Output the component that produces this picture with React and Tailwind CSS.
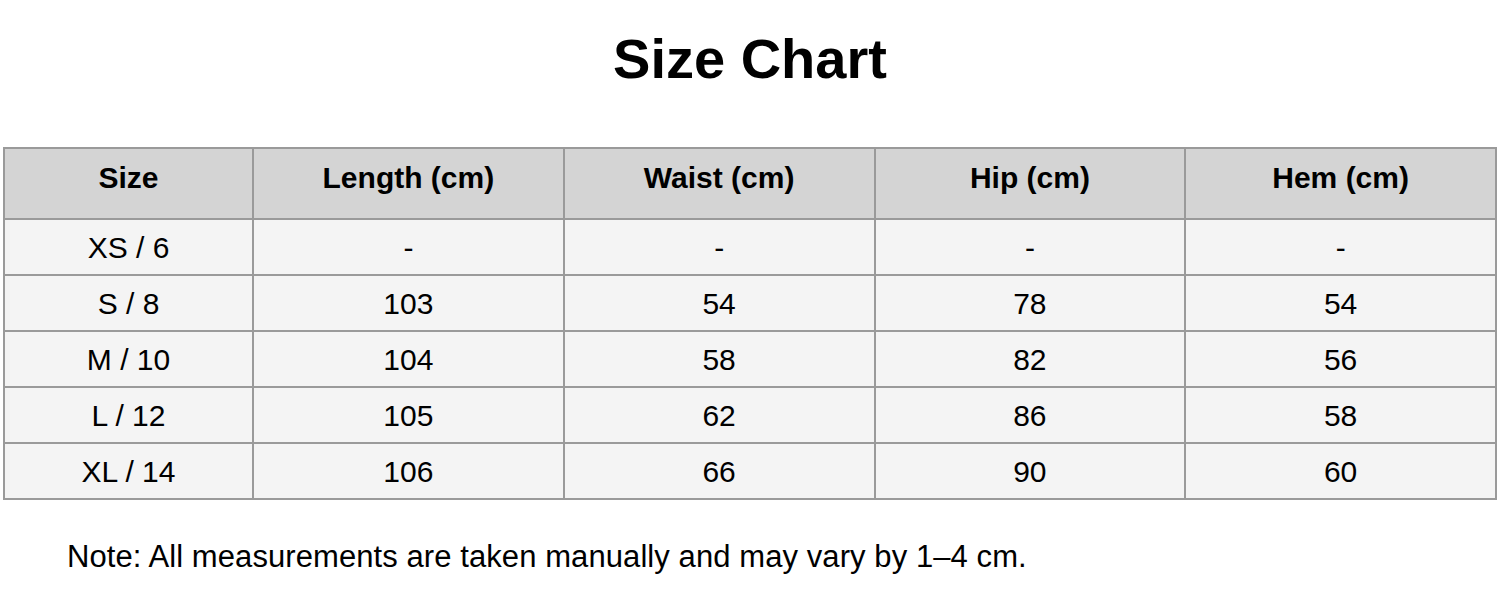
import React from "react";

const rows = [
  ["XS / 6", "-", "-", "-", "-"],
  ["S / 8", "103", "54", "78", "54"],
  ["M / 10", "104", "58", "82", "56"],
  ["L / 12", "105", "62", "86", "58"],
  ["XL / 14", "106", "66", "90", "60"],
];

const headers = ["Size", "Length (cm)", "Waist (cm)", "Hip (cm)", "Hem (cm)"];

export default function App() {
  return (
    <div className="w-[1500px] h-[590px] bg-white text-black font-['Liberation_Sans',Arial,sans-serif]">
      <h1 className="pt-[27px] text-center text-[56px] font-bold leading-[64px]">Size Chart</h1>
      <div className="px-[3px] pt-[56px]">
        <table className="w-full border-collapse table-fixed">
          <colgroup>
            <col className="w-[249px]" />
            <col />
            <col />
            <col />
            <col />
          </colgroup>
          <thead>
            <tr className="h-[71px] bg-[#d4d4d4]">
              {headers.map((h) => (
                <th key={h} className="border-2 border-[#9a9a9a] text-[30px] font-bold text-center px-0 pt-0 pb-[13px]">
                  {h}
                </th>
              ))}
            </tr>
          </thead>
          <tbody>
            {rows.map((r) => (
              <tr key={r[0]} className="h-[56px] bg-[#f4f4f4]">
                {r.map((c, i) => (
                  <td key={i} className="border-2 border-[#9a9a9a] text-[30px] text-center p-0">
                    {c}
                  </td>
                ))}
              </tr>
            ))}
          </tbody>
        </table>
      </div>
      <p className="pl-[67px] pt-[39px] text-[31px] tracking-[0.08px] leading-[36px]">
        Note: All measurements are taken manually and may vary by 1–4 cm.
      </p>
    </div>
  );
}
